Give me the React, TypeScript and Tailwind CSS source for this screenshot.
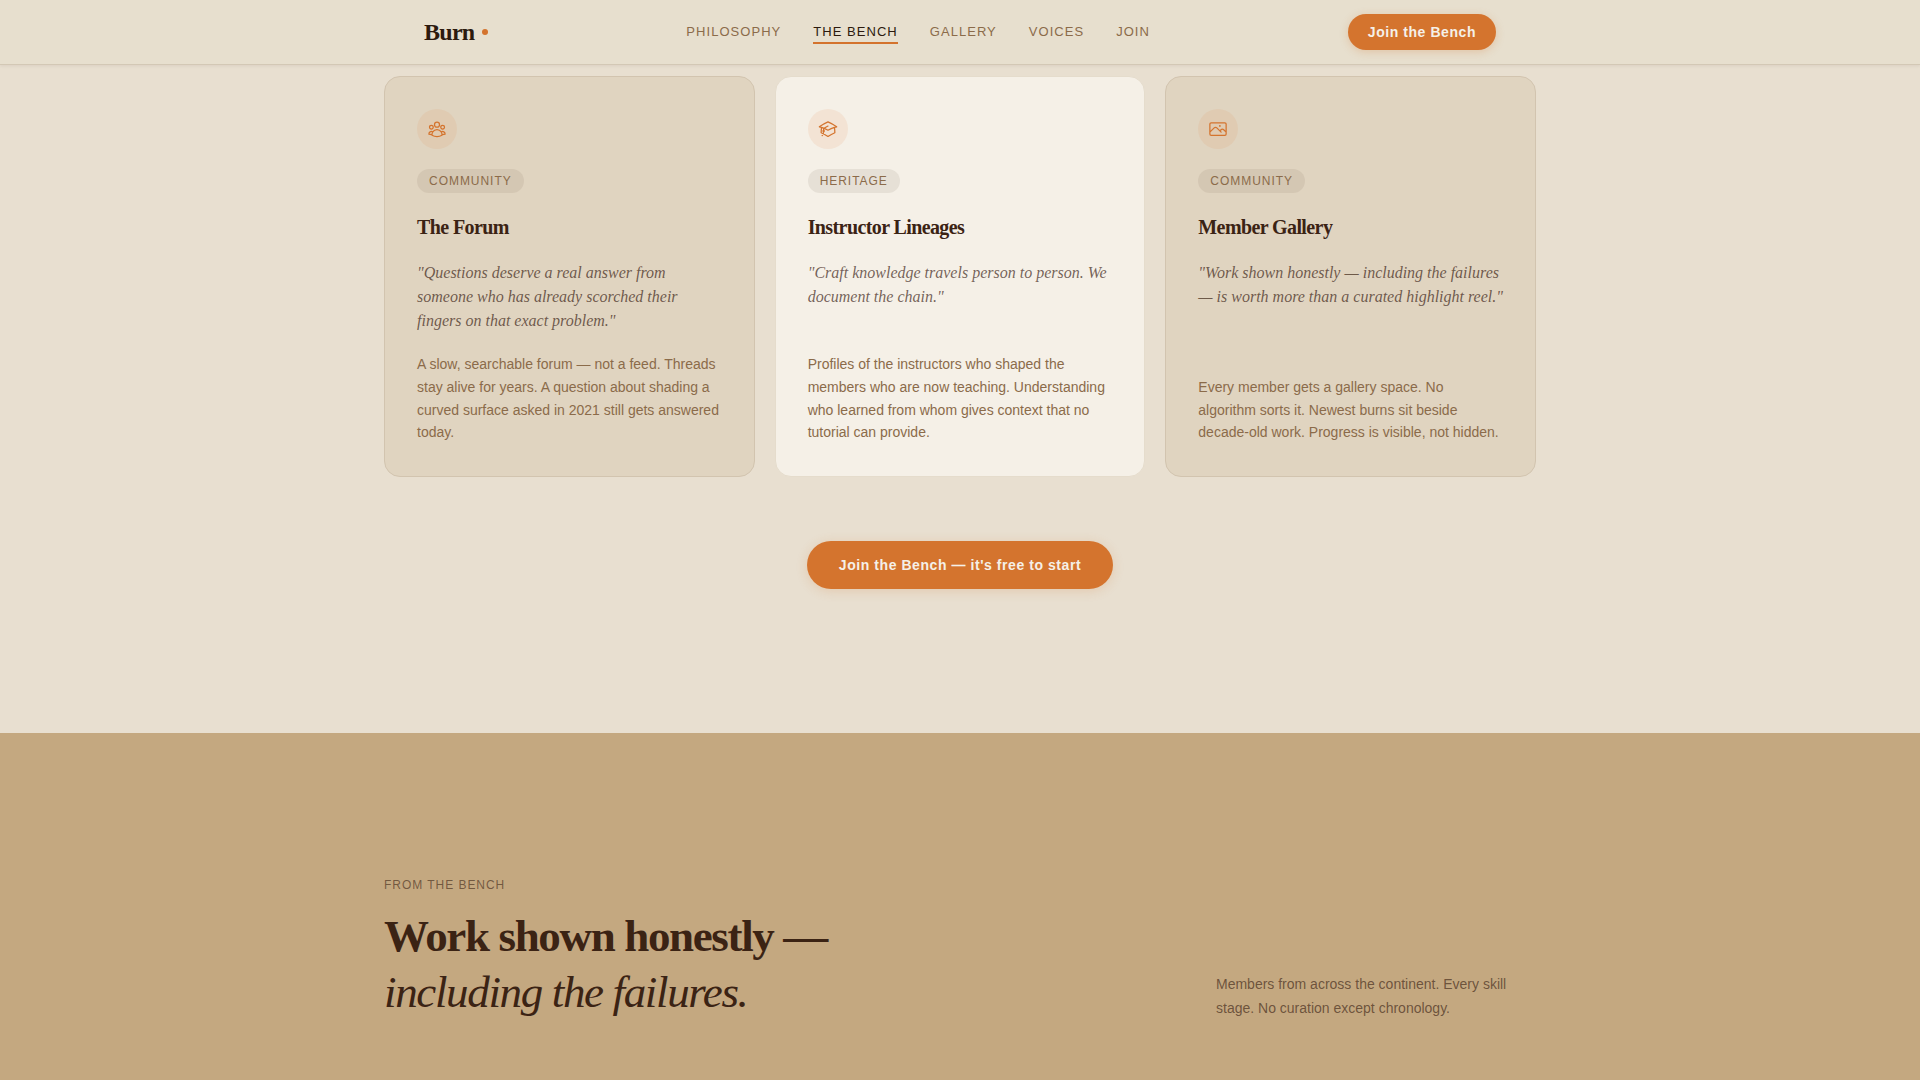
import type { IconType } from "react-icons";
import { HiOutlineAcademicCap, HiOutlinePhoto, HiOutlineUserGroup } from "react-icons/hi2";
import clsx from "clsx";

type Feature = {
  icon: IconType;
  tag: string;
  title: string;
  quote: string;
  body: string;
  light?: boolean;
};

const NAV_LINKS = ["Philosophy", "The Bench", "Gallery", "Voices", "Join"];
const ACTIVE_LINK = "The Bench";

const FEATURES: ReadonlyArray<Feature> = [
  {
    icon: HiOutlineUserGroup,
    tag: "Community",
    title: "The Forum",
    quote: "Questions deserve a real answer from someone who has already scorched their fingers on that exact problem.",
    body: "A slow, searchable forum — not a feed. Threads stay alive for years. A question about shading a curved surface asked in 2021 still gets answered today.",
  },
  {
    icon: HiOutlineAcademicCap,
    tag: "Heritage",
    title: "Instructor Lineages",
    quote: "Craft knowledge travels person to person. We document the chain.",
    body: "Profiles of the instructors who shaped the members who are now teaching. Understanding who learned from whom gives context that no tutorial can provide.",
    light: true,
  },
  {
    icon: HiOutlinePhoto,
    tag: "Community",
    title: "Member Gallery",
    quote: "Work shown honestly — including the failures — is worth more than a curated highlight reel.",
    body: "Every member gets a gallery space. No algorithm sorts it. Newest burns sit beside decade-old work. Progress is visible, not hidden.",
  },
];

const SERIF = "font-['Liberation_Serif',serif]";
const CONTAINER = "mx-auto w-full max-w-6xl";

const Header = () => (
  <header className="sticky top-0 z-10 border-b border-[#d3c8b5] bg-[#e7dfce] shadow-[0_1px_3px_rgba(59,35,20,0.08)]">
    <div className={`${CONTAINER} flex h-16 items-center justify-between px-10`}>
      <a href="#top" className={`${SERIF} flex items-center gap-2 text-2xl font-bold tracking-[-0.03em] text-[#2c1a0e]`}>
        Burn
        <span aria-hidden className="size-1.5 rounded-full bg-[#d4732d]" />
      </a>

      <nav aria-label="Main" className="flex gap-8">
        {NAV_LINKS.map((label) => (
          <a
            key={label}
            href={`#${label.toLowerCase().replace(" ", "-")}`}
            aria-current={label === ACTIVE_LINK ? "true" : undefined}
            className={clsx(
              "border-y-2 border-t-transparent text-[13px] leading-5 tracking-[0.08em] uppercase",
              label === ACTIVE_LINK ? "border-b-[#d4732d] text-[#2c1a0e]" : "border-b-transparent text-[#8b6b4a]",
            )}>
            {label}
          </a>
        ))}
      </nav>

      <button
        type="button"
        className="h-9 rounded-full bg-[#d4742e] px-5 text-sm font-bold tracking-[0.04em] text-[#f5f0e8] shadow-[0_2px_8px_rgba(212,115,42,0.25)]">
        Join the Bench
      </button>
    </div>
  </header>
);

const FeatureCard = ({ icon: Icon, tag, title, quote, body, light }: Feature) => (
  <article
    className={clsx(
      "flex flex-col items-start gap-5 rounded-2xl border p-8",
      light ? "border-[#e5dccc] bg-[#f5f0e7]" : "border-[#d2c4af] bg-[#e0d4c0]",
    )}>
    <span
      className={clsx(
        "flex size-10 items-center justify-center rounded-full text-[#d4742e]",
        light ? "bg-[#f3e3d4]" : "bg-[#e0cbb2]",
      )}>
      <Icon aria-hidden className="size-5" />
    </span>
    <span
      className={clsx(
        "rounded-full px-3 py-1 text-xs tracking-[0.08em] text-[#8b6b4a] uppercase",
        light ? "bg-[#e6e0d6]" : "bg-[#d4c7b3]",
      )}>
      {tag}
    </span>
    <h3 className={`${SERIF} text-xl font-bold tracking-[-0.03em] text-[#3b2314]`}>{title}</h3>
    <p className={`${SERIF} flex-1 text-base text-[#3b2314]/70 italic`}>{`"${quote}"`}</p>
    <p className="text-sm leading-relaxed text-[#8b6b4a]">{body}</p>
  </article>
);

export default function App() {
  return (
    <div id="top" className="flex min-h-screen flex-col bg-[#e8dfd0] font-['Liberation_Sans',sans-serif]">
      <Header />

      <main className="flex flex-1 flex-col">
        <section id="the-bench" className="pt-[11px] pb-36">
          <div className={`${CONTAINER} flex flex-col items-center gap-16`}>
            <div className="grid grid-cols-3 gap-5">
              {FEATURES.map((feature) => (
                <FeatureCard key={feature.title} {...feature} />
              ))}
            </div>
            <button
              type="button"
              className="h-12 rounded-full bg-[#d4742e] px-8 text-sm font-bold tracking-[0.04em] text-[#f5f0e8] shadow-[0_2px_12px_rgba(212,115,42,0.2)]">
              Join the Bench — it's free to start
            </button>
          </div>
        </section>

        <section id="gallery" className="flex-1 bg-[#c4a880] pt-36 pb-14">
          <div className={`${CONTAINER} flex items-end justify-between`}>
            <div className="flex flex-col gap-[15px]">
              <p className="text-xs tracking-[0.08em] text-[#3b2314]/60 uppercase">From the bench</p>
              <h2 className={`${SERIF} text-[45px] leading-14 font-bold tracking-[-0.03em] text-[#3b2314]`}>
                Work shown honestly —
                <br />
                <em className="font-normal">including the failures.</em>
              </h2>
            </div>
            <p className="max-w-xs text-sm leading-6 text-[#3b2314]/65">
              Members from across the continent. Every skill stage. No curation except chronology.
            </p>
          </div>
        </section>
      </main>
    </div>
  );
}
